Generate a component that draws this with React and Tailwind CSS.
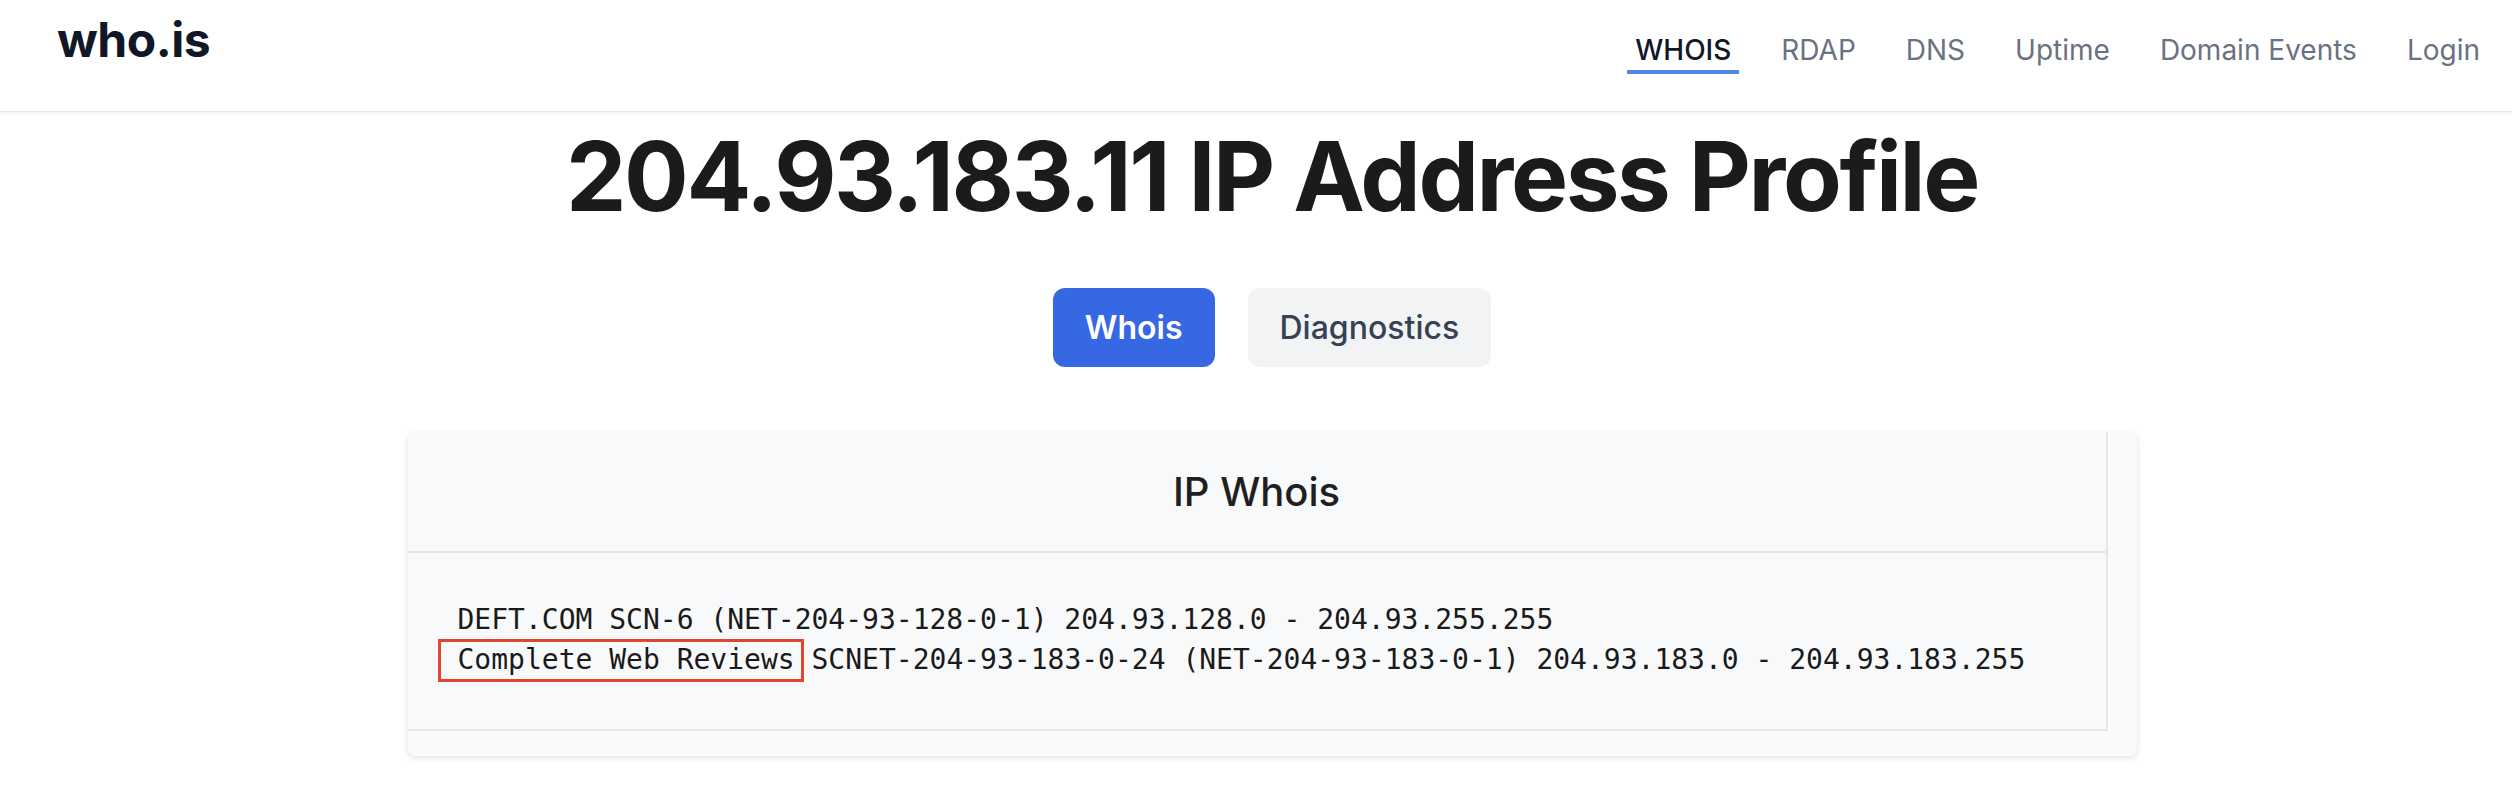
import React from "react";

const navLinks = ["WHOIS", "RDAP", "DNS", "Uptime", "Domain Events", "Login"];

const Header = () => (
  <header className="h-[112px] flex items-start justify-between pl-[57px] pr-[24px] bg-white border-b border-gray-200 shadow-[0_2px_4px_rgba(0,0,0,0.06)]">
    <a className="mt-[8px] text-[48px] leading-[64px] font-bold text-gray-900 tracking-[-0.01em]">
      who.is
    </a>
    <nav className="flex items-start gap-[34px] mt-[30px]">
      {navLinks.map((link, idx) => (
        <a
          key={link}
          className={`px-2 text-[28px] leading-[40px] border-b-4 ${
            idx === 0
              ? "text-gray-900 border-[#4f86ec] font-medium"
              : "text-gray-500 border-transparent"
          }`}
        >
          {link}
        </a>
      ))}
    </nav>
  </header>
);

const App = () => {
  return (
    <div className="min-h-screen bg-white font-['Inter',sans-serif]">
      <Header />

      <main className="pl-[32px] flex flex-col items-center">
        <h1 className="mt-[16px] text-[96px] leading-[96px] font-bold text-[#1b1b1b] tracking-[-0.025em]">
          204.93.183.11 IP Address Profile
        </h1>

        {/* Tabs */}
        <div className="mt-[64px] flex gap-[33px]">
          <button className="h-[79px] px-[32px] rounded-[12px] bg-[#3768e3] text-white text-[32px] font-semibold">
            Whois
          </button>
          <button className="h-[79px] px-[32px] rounded-[12px] bg-[#f2f3f5] text-gray-700 text-[32px] font-medium">
            Diagnostics
          </button>
        </div>

        {/* Whois card */}
        <section className="mt-[65px] w-[1729px] bg-[#fafafa] rounded-lg shadow-[0_2px_6px_rgba(0,0,0,0.12)] pr-[29px] pb-[25px]">
          <div className="border-r-2 border-b-2 border-[#e6e7e9] bg-[#f8f9fa] rounded-tl-lg">
            <div className="h-[121px] flex items-center justify-center border-b-2 border-[#e6e7e9]">
              <h2 className="text-[40px] font-medium text-[#1f1f1f]">IP Whois</h2>
            </div>
            <div className="pl-[50px] pt-[47px] pb-[49px] font-['DejaVu_Sans_Mono',monospace] text-[28px] leading-[40px] text-[#1a1a1a] whitespace-pre">
              <div>DEFT.COM SCN-6 (NET-204-93-128-0-1) 204.93.128.0 - 204.93.255.255</div>
              <div>
                <span className="relative">
                  Complete Web Reviews
                  <span className="absolute left-[-20px] right-[-9px] top-[-4px] bottom-[-6px] border-[3px] border-[#e4452d]" />
                </span>{" "}
                SCNET-204-93-183-0-24 (NET-204-93-183-0-1) 204.93.183.0 - 204.93.183.255
              </div>
            </div>
          </div>
        </section>
      </main>
    </div>
  );
};

export default App;
